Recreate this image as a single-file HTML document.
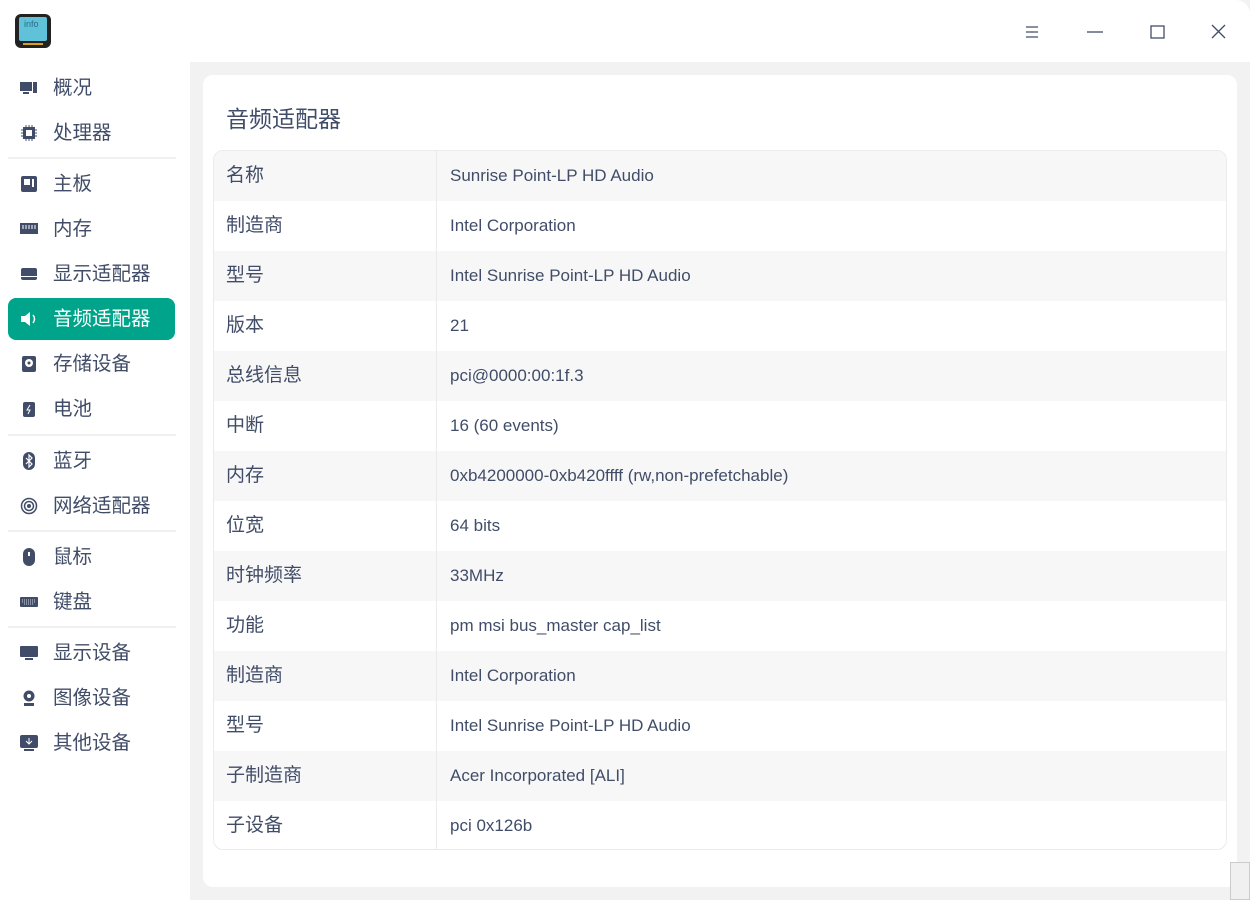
<!DOCTYPE html>
<html><head><meta charset="utf-8"><style>
*{margin:0;padding:0;box-sizing:border-box}
body{width:1250px;height:900px;background:#f2f2f2;font-family:"Liberation Sans","Noto Sans CJK SC",sans-serif;color:#414d68;position:relative;overflow:hidden}
.top{position:absolute;left:0;top:0;width:1250px;height:62px;background:#fff;border-top-right-radius:14px}
.side{position:absolute;left:0;top:62px;width:190px;height:838px;background:#fff}
.it{position:absolute;left:8px;width:167px;height:42px;font-size:19.5px;line-height:42px;padding-left:45px}
.it svg{position:absolute;left:12px;top:12px}
.sel{background:#00a48a;color:#fff;border-radius:8px}
.sep{position:absolute;left:8px;width:168px;height:2px;background:#f0f0f0}
.card{position:absolute;left:203px;top:75px;width:1034px;height:812px;background:#fff;border-radius:10px}
h1{position:absolute;left:23px;top:25px;font-size:23px;font-weight:normal;color:#414d68}
.tbl{position:absolute;left:10px;top:75px;width:1014px;border:1px solid #ebebeb;border-radius:10px;overflow:hidden}
.r{height:50px;display:flex;font-size:17px;line-height:50px}
.r:last-child{height:48px}
.r:nth-child(odd){background:#f7f7f7}
.k{width:223px;padding-left:12px;border-right:1px solid #ebebeb;font-size:19px}
.v{padding-left:13px}
</style></head><body>
<div class="top">
<svg style="position:absolute;left:14px;top:13px" width="38" height="36" viewBox="0 0 38 36"><rect x="1" y="1" width="36" height="34" rx="6" fill="#222"/><rect x="5" y="4" width="28" height="24" rx="2" fill="#5fc2d8"/><text x="10" y="14" font-size="9" fill="#2a6a8a" font-family="Liberation Sans">info</text><rect x="9" y="30" width="20" height="2" fill="#d8a020"/></svg>
<svg style="position:absolute;left:1025px;top:25px" width="14" height="14"><path d="M1 2h12M1 7h12M1 12h12" stroke="#414d68" stroke-width="1.3"/></svg>
<svg style="position:absolute;left:1087px;top:31px" width="16" height="2"><path d="M0 1h16" stroke="#414d68" stroke-width="1.3"/></svg>
<svg style="position:absolute;left:1150px;top:25px" width="16" height="14"><rect x="1" y="1" width="13" height="12" fill="none" stroke="#414d68" stroke-width="1.3"/></svg>
<svg style="position:absolute;left:1211px;top:24px" width="15" height="15"><path d="M1 1l13 13M14 1L1 14" stroke="#414d68" stroke-width="1.3"/></svg>
</div>
<div class="side">
<div class="it" style="top:5px"><svg width="18" height="18"><rect x="0" y="3" width="12" height="9" fill="#414d68"/><rect x="13" y="3" width="4" height="11" fill="#414d68"/><rect x="3" y="13" width="6" height="2" fill="#414d68"/></svg>概况</div>
<div class="it" style="top:50px"><svg width="18" height="18"><rect x="3" y="3" width="12" height="12" fill="#414d68"/><path d="M1 6h16M1 9h16M1 12h16M6 1v16M9 1v16M12 1v16" stroke="#414d68" stroke-width="1"/><rect x="6" y="6" width="6" height="6" fill="#fff"/></svg>处理器</div>
<div class="sep" style="top:95px"></div>
<div class="it" style="top:101px"><svg width="18" height="18"><rect x="1" y="1" width="16" height="16" rx="2" fill="#414d68"/><rect x="4" y="4" width="6" height="6" fill="#fff"/><rect x="12" y="4" width="2" height="8" fill="#fff"/></svg>主板</div>
<div class="it" style="top:146px"><svg width="18" height="18"><rect x="0" y="3" width="18" height="11" fill="#414d68"/><path d="M3 5v4M6 5v4M9 5v4M12 5v4M15 5v4" stroke="#fff"/></svg>内存</div>
<div class="it" style="top:191px"><svg width="18" height="18"><rect x="1" y="3" width="16" height="12" rx="2" fill="#414d68"/><rect x="1" y="11" width="16" height="1" fill="#fff"/></svg>显示适配器</div>
<div class="it sel" style="top:236px"><svg width="18" height="18"><path d="M1 6h4l5-4v14l-5-4H1z" fill="#fff"/><path d="M13 5q3 4 0 8" stroke="#fff" fill="none" stroke-width="1.5"/></svg>音频适配器</div>
<div class="it" style="top:281px"><svg width="18" height="18"><rect x="2" y="1" width="14" height="16" rx="2" fill="#414d68"/><circle cx="9" cy="8" r="4" fill="#fff"/><circle cx="9" cy="8" r="1.5" fill="#414d68"/></svg>存储设备</div>
<div class="it" style="top:326px"><svg width="18" height="18"><rect x="3" y="2" width="12" height="15" rx="2" fill="#414d68"/><path d="M10 5l-3 5h3l-2 4" stroke="#fff" fill="none"/></svg>电池</div>
<div class="sep" style="top:372px"></div>
<div class="it" style="top:378px"><svg width="18" height="18"><rect x="3" y="0" width="12" height="18" rx="6" fill="#414d68"/><path d="M6 6l6 6-3 3V3l3 3-6 6" stroke="#fff" fill="none" stroke-width="1.2"/></svg>蓝牙</div>
<div class="it" style="top:423px"><svg width="18" height="18"><circle cx="9" cy="9" r="7.5" fill="none" stroke="#414d68" stroke-width="1.5"/><circle cx="9" cy="9" r="4.5" fill="none" stroke="#414d68" stroke-width="1.5"/><circle cx="9" cy="9" r="2" fill="#414d68"/></svg>网络适配器</div>
<div class="sep" style="top:468px"></div>
<div class="it" style="top:474px"><svg width="18" height="18"><rect x="3" y="0" width="12" height="18" rx="6" fill="#414d68"/><rect x="8" y="4" width="2" height="4" fill="#fff"/></svg>鼠标</div>
<div class="it" style="top:519px"><svg width="18" height="18"><rect x="0" y="4" width="18" height="10" rx="1" fill="#414d68"/><path d="M2 7h14M2 9h14M4 11h10" stroke="#fff" stroke-dasharray="1 1" stroke-width=".8"/></svg>键盘</div>
<div class="sep" style="top:564px"></div>
<div class="it" style="top:570px"><svg width="18" height="18"><rect x="0" y="2" width="18" height="11" rx="1" fill="#414d68"/><rect x="5" y="14" width="8" height="2" fill="#414d68"/></svg>显示设备</div>
<div class="it" style="top:615px"><svg width="18" height="18"><circle cx="9" cy="7" r="5.5" fill="#414d68"/><circle cx="9" cy="7" r="2" fill="#fff"/><rect x="4" y="14" width="10" height="3" fill="#414d68"/></svg>图像设备</div>
<div class="it" style="top:660px"><svg width="18" height="18"><rect x="0" y="1" width="18" height="13" rx="2" fill="#414d68"/><path d="M9 4v6M6 7l3 3 3-3" stroke="#fff" fill="none"/><rect x="4" y="15" width="10" height="2" fill="#414d68"/></svg>其他设备</div>
</div>
<div class="card">
<h1>音频适配器</h1>
<div class="tbl">
<div class="r"><div class="k">名称</div><div class="v">Sunrise Point-LP HD Audio</div></div>
<div class="r"><div class="k">制造商</div><div class="v">Intel Corporation</div></div>
<div class="r"><div class="k">型号</div><div class="v">Intel Sunrise Point-LP HD Audio</div></div>
<div class="r"><div class="k">版本</div><div class="v">21</div></div>
<div class="r"><div class="k">总线信息</div><div class="v">pci@0000:00:1f.3</div></div>
<div class="r"><div class="k">中断</div><div class="v">16 (60 events)</div></div>
<div class="r"><div class="k">内存</div><div class="v">0xb4200000-0xb420ffff (rw,non-prefetchable)</div></div>
<div class="r"><div class="k">位宽</div><div class="v">64 bits</div></div>
<div class="r"><div class="k">时钟频率</div><div class="v">33MHz</div></div>
<div class="r"><div class="k">功能</div><div class="v">pm msi bus_master cap_list</div></div>
<div class="r"><div class="k">制造商</div><div class="v">Intel Corporation</div></div>
<div class="r"><div class="k">型号</div><div class="v">Intel Sunrise Point-LP HD Audio</div></div>
<div class="r"><div class="k">子制造商</div><div class="v">Acer Incorporated [ALI]</div></div>
<div class="r"><div class="k">子设备</div><div class="v">pci 0x126b</div></div>
</div>
</div>
<div style="position:absolute;left:1230px;top:862px;width:20px;height:38px;background:#f0f0f0;border:1px solid #ccc"></div>
</body></html>
